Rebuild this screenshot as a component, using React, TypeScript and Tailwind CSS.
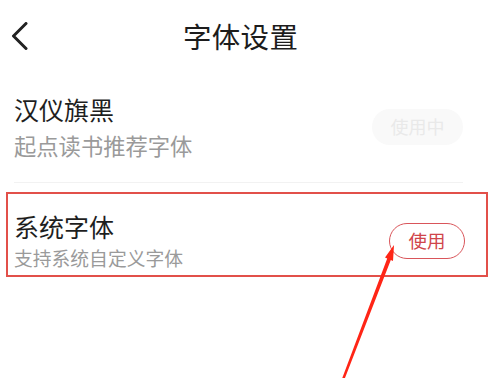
const font = { fontFamily: '"Noto Sans CJK SC", "Noto Sans", sans-serif' };

function BackIcon() {
    return (
        <svg width="18" height="28" viewBox="0 0 18 28" className="shrink-0">
            <path d="M15 1.5 L2.5 14 L15 26.5" fill="none" stroke="#222" strokeWidth="3" strokeLinecap="round" strokeLinejoin="round" />
        </svg>
    );
}

function Arrow() {
    // red annotation arrow pointing at the "使用" button
    return (
        <svg className="absolute inset-0 pointer-events-none" width="494" height="378" viewBox="0 0 494 378">
            <polygon
                points="394,245 393,261 390.8,260 344.2,380 341.8,379.3 387.2,258.4 385,257.6"
                fill="#ff2516"
            />
        </svg>
    );
}

export default function App() {
    return (
        <div className="relative w-[494px] h-[378px] overflow-hidden bg-white" style={font}>
            {/* header */}
            <div className="flex items-center h-[72px] pl-[11px]">
                <BackIcon />
                <h1 className="ml-[154px] text-[28.5px] leading-none font-normal text-[#1c1c1c] tracking-[0.3px]">字体设置</h1>
            </div>

            {/* 汉仪旗黑 */}
            <div className="mx-[14px] mr-[31px] pt-[25px] pb-[26px] border-b border-[#f2f2f2] flex items-center justify-between">
                <div className="flex flex-col">
                    <span className="text-[25px] leading-[25px] text-[#1e1e1e]">汉仪旗黑</span>
                    <span className="mt-[12px] text-[22.3px] leading-[22px] text-[#9a9a9a]">起点读书推荐字体</span>
                </div>
                <div className="w-[91px] h-[36px] rounded-full bg-[#f9f9f9] flex items-center justify-center text-[18px] text-[#e9e9e9]">
                    使用中
                </div>
            </div>

            {/* 系统字体 */}
            <div className="mx-[6px] mt-[9px] border-2 border-[#e2504a] pl-[6px] pr-[21px] pt-[20px] pb-[7px] flex items-center justify-between">
                <div className="flex flex-col">
                    <span className="text-[25px] leading-[25px] text-[#1e1e1e]">系统字体</span>
                    <span className="mt-[9px] text-[18.8px] leading-[20px] text-[#9a9a9a]">支持系统自定义字体</span>
                </div>
                <div className="w-[76px] h-[36px] rounded-full border-[1.5px] border-[#d9555a] flex items-center justify-center text-[18.5px] text-[#d0454b]">
                    使用
                </div>
            </div>

            <Arrow />
        </div>
    );
}
